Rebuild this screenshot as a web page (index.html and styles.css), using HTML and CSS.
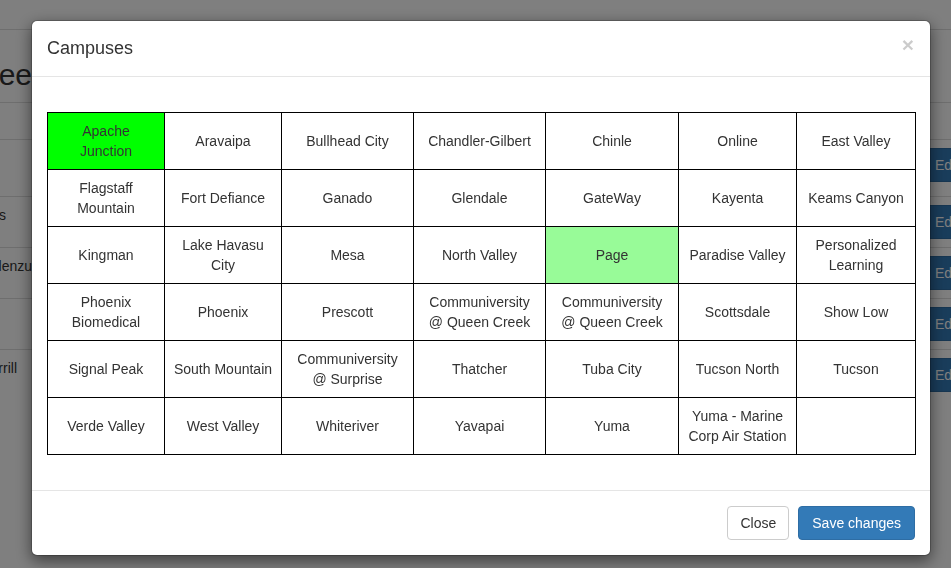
FILE: index.html
```html
<!DOCTYPE html>
<html lang="en">
<head>
<meta charset="utf-8">
<title>Campuses</title>
<link rel="stylesheet" href="styles.css">
</head>
<body>
<div class="page">
  <div class="navbar"></div>
  <div class="page-title"><span>Employee</span></div>
  <div class="list">
    <div class="list-row list-head"></div>
    <div class="list-row tall"><div class="clip"></div><div class="grow"></div><div class="act"><span class="edit">Edit</span></div></div>
    <div class="list-row"><div class="clip clip-s"><span>Adams</span></div><div class="grow"></div><div class="act"><span class="edit">Edit</span></div></div>
    <div class="list-row"><div class="clip"><span>Valenzu</span></div><div class="grow"></div><div class="act"><span class="edit">Edit</span></div></div>
    <div class="list-row"><div class="clip"></div><div class="grow"></div><div class="act"><span class="edit">Edit</span></div></div>
    <div class="list-row"><div class="clip clip-m"><span>Merrill</span></div><div class="grow"></div><div class="act"><span class="edit">Edit</span></div></div>
  </div>
</div>

<div class="backdrop"></div>

<div class="modal">
  <div class="modal-header">
    <h4 class="modal-title">Campuses</h4>
    <span class="close">×</span>
  </div>
  <div class="modal-body">
    <div class="campus-grid">
      <div class="cell selected">Apache Junction</div>
      <div class="cell">Aravaipa</div>
      <div class="cell">Bullhead City</div>
      <div class="cell">Chandler-Gilbert</div>
      <div class="cell">Chinle</div>
      <div class="cell">Online</div>
      <div class="cell">East Valley</div>

      <div class="cell">Flagstaff Mountain</div>
      <div class="cell">Fort Defiance</div>
      <div class="cell">Ganado</div>
      <div class="cell">Glendale</div>
      <div class="cell">GateWay</div>
      <div class="cell">Kayenta</div>
      <div class="cell">Keams Canyon</div>

      <div class="cell">Kingman</div>
      <div class="cell">Lake Havasu City</div>
      <div class="cell">Mesa</div>
      <div class="cell">North Valley</div>
      <div class="cell hover">Page</div>
      <div class="cell">Paradise Valley</div>
      <div class="cell">Personalized Learning</div>

      <div class="cell">Phoenix Biomedical</div>
      <div class="cell">Phoenix</div>
      <div class="cell">Prescott</div>
      <div class="cell">Communiversity @ Queen Creek</div>
      <div class="cell">Communiversity @ Queen Creek</div>
      <div class="cell">Scottsdale</div>
      <div class="cell">Show Low</div>

      <div class="cell">Signal Peak</div>
      <div class="cell">South Mountain</div>
      <div class="cell">Communiversity @ Surprise</div>
      <div class="cell">Thatcher</div>
      <div class="cell">Tuba City</div>
      <div class="cell">Tucson North</div>
      <div class="cell">Tucson</div>

      <div class="cell">Verde Valley</div>
      <div class="cell">West Valley</div>
      <div class="cell">Whiteriver</div>
      <div class="cell">Yavapai</div>
      <div class="cell">Yuma</div>
      <div class="cell">Yuma - Marine Corp Air Station</div>
      <div class="cell"></div>
    </div>
  </div>
  <div class="modal-footer">
    <button class="btn btn-default">Close</button>
    <button class="btn btn-primary">Save changes</button>
  </div>
</div>
</body>
</html>
```

FILE: styles.css
```css
* { box-sizing: border-box; }

html, body {
  margin: 0;
  padding: 0;
  height: 100%;
  overflow: hidden;
  background: #fff;
  font-family: "Liberation Sans", Arial, Helvetica, sans-serif;
  font-size: 14px;
  line-height: 20px;
  color: #333;
}

/* ---------- background page ---------- */
.page {
  width: 951px;
  overflow: hidden;
}

.navbar {
  height: 30px;
  border-bottom: 1px solid #ddd;
}

.page-title {
  width: 32px;
  overflow: hidden;
  display: flex;
  justify-content: flex-end;
  white-space: nowrap;
  font-size: 30px;
  line-height: 33px;
  margin-top: 28px;
  height: 44px;
}

.list-row {
  display: flex;
  border-top: 1px solid #ddd;
  padding: 8px 0;
  min-height: 51px;
}

.list-head { min-height: 37px; }

.list-row.tall { min-height: 57px; }

.clip {
  width: 32px;
  overflow: hidden;
  display: flex;
  justify-content: flex-end;
  white-space: nowrap;
}

.clip-s { width: 6px; margin-right: 26px; }
.clip-m { width: 17px; margin-right: 15px; }

.grow { flex: 1; }

.act {
  width: 29px;
  overflow: hidden;
  white-space: nowrap;
}

.edit {
  display: inline-block;
  height: 34px;
  padding: 6px 12px;
  background: #337ab7;
  border: 1px solid #2e6da4;
  border-radius: 4px;
  color: #fff;
}

.backdrop {
  position: fixed;
  inset: 0;
  background: rgba(0, 0, 0, 0.5);
}

/* ---------- modal ---------- */
.modal {
  position: fixed;
  top: 20px;
  left: 31px;
  width: 900px;
  background: #fff;
  border: 1px solid rgba(0, 0, 0, 0.2);
  border-radius: 6px;
  box-shadow: 0 5px 15px rgba(0, 0, 0, 0.5);
  background-clip: padding-box;
}

.modal-header {
  display: flex;
  justify-content: space-between;
  align-items: flex-start;
  padding: 15px;
  border-bottom: 1px solid #e5e5e5;
}

.modal-title {
  margin: 0;
  font-size: 18px;
  line-height: 25px;
  font-weight: normal;
  color: #333;
}

.close {
  font-size: 21px;
  font-weight: bold;
  line-height: 1;
  color: #000;
  opacity: 0.2;
  margin-top: -2px;
  margin-right: 1px;
}

.modal-body {
  padding: 15px;
}

.campus-grid {
  display: grid;
  grid-template-columns: 117px 117px 132px 132px 133px 118px 119px;
  width: 869px;
  margin: 20px 0;
  border-top: 1px solid #000;
  border-left: 1px solid #000;
}

.cell {
  height: 57px;
  padding: 8px;
  border-right: 1px solid #000;
  border-bottom: 1px solid #000;
  display: flex;
  align-items: center;
  justify-content: center;
  text-align: center;
  color: #333;
}

.cell.selected { background: #00ff00; }
.cell.hover { background: #98fb98; }

.modal-footer {
  display: flex;
  justify-content: flex-end;
  gap: 9px;
  padding: 15px;
  border-top: 1px solid #e5e5e5;
}

.btn {
  height: 34px;
  padding: 6px 12px;
  font-family: inherit;
  font-size: 14px;
  line-height: 20px;
  border-radius: 4px;
  border: 1px solid transparent;
  cursor: pointer;
}

.btn-default {
  background: #fff;
  border-color: #ccc;
  color: #333;
}

.btn-primary {
  padding: 6px 13px;
  background: #337ab7;
  border-color: #2e6da4;
  color: #fff;
}
```
